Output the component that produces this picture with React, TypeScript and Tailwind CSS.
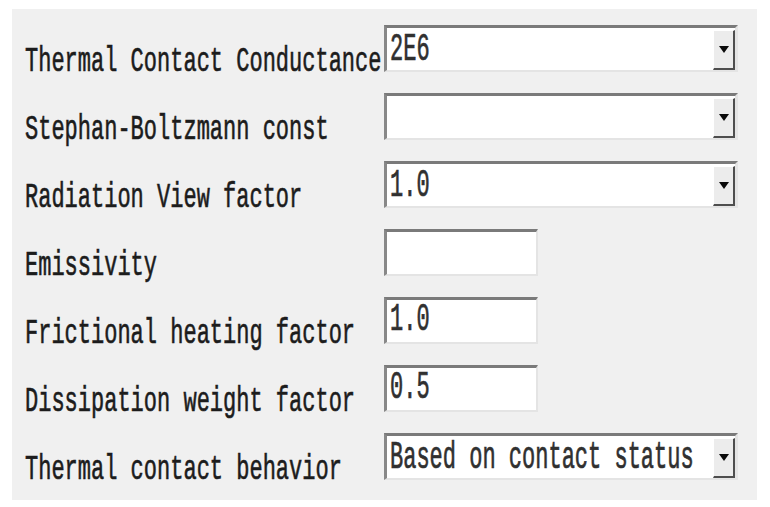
import React from 'react';

type Field = {
  label: string;
  value: string;
  combo: boolean;
};

const fields: Field[] = [
  { label: 'Thermal Contact Conductance', value: '2E6', combo: true },
  { label: 'Stephan-Boltzmann const', value: '', combo: true },
  { label: 'Radiation View factor', value: '1.0', combo: true },
  { label: 'Emissivity', value: '', combo: false },
  { label: 'Frictional heating factor', value: '1.0', combo: false },
  { label: 'Dissipation weight factor', value: '0.5', combo: false },
  { label: 'Thermal contact behavior', value: 'Based on contact status', combo: true },
];

function DropButton() {
  return (
    <div className="flex h-full w-[22px] shrink-0 items-center justify-center border-t border-l border-t-white border-l-white border-r-2 border-b-2 border-r-[#4e4e4e] border-b-[#4e4e4e] bg-[#ececec]">
      <svg width="10" height="7" viewBox="0 0 10 7">
        <path d="M0 0 H10 L5 7 Z" fill="#0a0a0a" />
      </svg>
    </div>
  );
}

function FieldBox({ value, combo }: { value: string; combo: boolean }) {
  return (
    <div
      className={
        combo
          ? 'flex h-[47px] w-[354px] items-stretch border-t-[3px] border-l-[3px] border-t-[#7a7a7a] border-l-[#888888] border-b-2 border-r-[3px] border-b-[#e4e4e4] border-r-[#e4e4e4] bg-white pt-[2px]'
          : 'flex h-[47px] w-[154px] items-stretch border-t-[3px] border-l-[3px] border-t-[#7a7a7a] border-l-[#888888] border-b-2 border-r-2 border-b-[#e4e4e4] border-r-[#e4e4e4] bg-white'
      }
    >
      <div className="flex-1 overflow-visible pl-[3px]">
        <span className="inline-block origin-center scale-y-[1.8] whitespace-pre text-[22px] leading-[42px] text-[#303030] [-webkit-text-stroke:0.4px_#303030] [font-family:'Liberation_Mono',monospace]">
          {value}
        </span>
      </div>
      {combo && <DropButton />}
    </div>
  );
}

export default function App() {
  return (
    <div className="h-[507px] w-[770px] bg-white pt-[9px] pl-[12px]">
      <div className="flex h-[491px] w-[745px] flex-col gap-[21px] bg-[#f0f0f0] pt-[16px] pl-[13px]">
        {fields.map((f) => (
          <div key={f.label} className="flex h-[47px] items-start">
            <div className="h-[47px] w-[359px] shrink-0">
              <span className="mt-[14px] inline-block origin-center scale-y-[1.6] whitespace-pre text-[22px] leading-[47px] text-[#1c1c1c] [-webkit-text-stroke:0.4px_#1c1c1c] [font-family:'Liberation_Mono',monospace]">
                {f.label}
              </span>
            </div>
            <FieldBox value={f.value} combo={f.combo} />
          </div>
        ))}
      </div>
    </div>
  );
}
